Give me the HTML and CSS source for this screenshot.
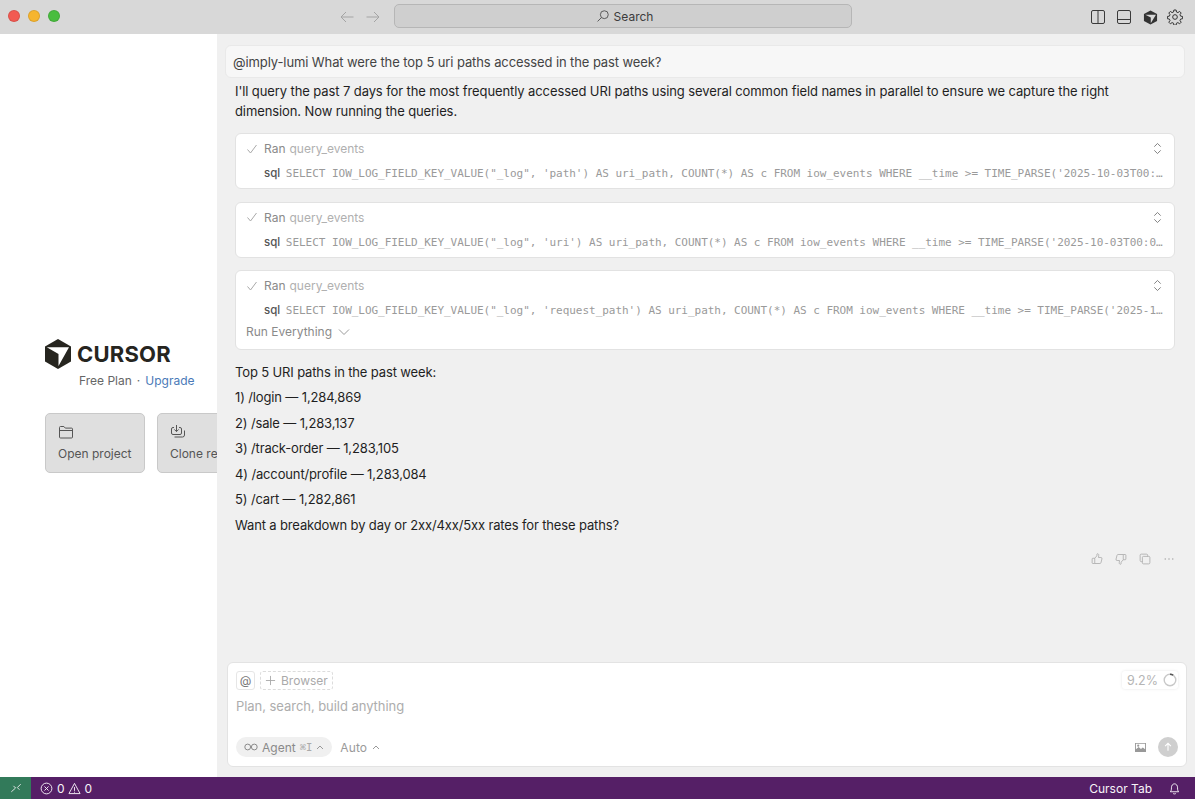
FILE: index.html
```html
<!DOCTYPE html>
<html lang="en">
<head>
<meta charset="utf-8">
<title>Cursor</title>
<link rel="stylesheet" href="styles.css">
</head>
<body>
<div class="window">
  <header class="titlebar">
    <div class="lights">
      <span class="light red"></span><span class="light yellow"></span><span class="light green"></span>
    </div>
    <div class="nav">
      <svg class="nav-icon" viewBox="0 0 16 16"><path d="M14.500 8H2M7 3 2 8l5 5"/></svg>
      <svg class="nav-icon" viewBox="0 0 16 16"><path d="M1.500 8H14M9 3l5 5-5 5"/></svg>
    </div>
    <div class="searchbox">
      <svg class="search-icon" viewBox="0 0 16 16"><circle cx="9.500" cy="6.500" r="4.500"/><path d="M6.200 9.800 1.800 14.200"/></svg>
      <span>Search</span>
    </div>
    <div class="title-actions">
      <svg class="tool" viewBox="0 0 14 14"><rect x=".5" y=".5" width="13" height="13" rx="1.500"/><path d="M7 .5v13"/></svg>
      <svg class="tool" viewBox="0 0 14 14"><rect x=".5" y=".5" width="13" height="13" rx="1.500"/><path d="M.5 9.500h13"/></svg>
      <svg class="tool cube-icon" viewBox="0 0 16 16"><path class="cube" d="M8 .5 15 4.300v7.400L8 15.500 1 11.700V4.300Z"/><path class="cube-cut" d="M2.500 5 13.800 5 8.300 14V8Z"/></svg>
      <svg class="tool gear" viewBox="0 0 24 24"><circle cx="12" cy="12" r="3.500"/><path d="M10.300 1.500h3.400l.5 3 2.200.9 2.500-1.800 2.400 2.400-1.800 2.500.9 2.200 3 .5v3.400l-3 .5-.9 2.200 1.800 2.500-2.400 2.400-2.500-1.800-2.200.9-.5 3h-3.400l-.5-3-2.200-.9-2.500 1.800-2.400-2.400 1.800-2.500-.9-2.200-3-.5v-3.400l3-.5.9-2.200-1.800-2.500 2.400-2.400 2.500 1.800 2.200-.9Z"/></svg>
    </div>
  </header>

  <div class="main">
    <aside class="sidebar">
      <div class="brand">
        <svg class="logo" viewBox="0 0 26 30"><path fill="#26251f" stroke="none" d="M13 0 26 7.500v15L13 30 0 22.500v-15Z"/><path fill="#fff" stroke="none" d="M1.800 8.300 24 8.300 13.500 27V15Z"/></svg>
        <span class="wordmark">CURSOR</span>
      </div>
      <div class="plan">Free Plan<span class="dot">·</span><span class="upgrade">Upgrade</span></div>
      <div class="cards">
        <div class="card">
          <svg class="card-icon" viewBox="0 0 16 16"><path d="M1.500 13V3.500a1 1 0 0 1 1-1h3.400l1.400 1.600h6.200a1 1 0 0 1 1 1V13a1 1 0 0 1-1 1h-11a1 1 0 0 1-1-1ZM1.500 6.500h13"/></svg>
          <span>Open project</span>
        </div>
        <div class="card">
          <svg class="card-icon" viewBox="0 0 16 16"><path d="M6.500 1v6.500M4.300 5.400l2.200 2.200 2.200-2.200M4 3.500H3a1.500 1.500 0 0 0-1.500 1.500v4A1.500 1.500 0 0 0 3 10.500h7A1.500 1.500 0 0 0 11.500 9V5A1.500 1.500 0 0 0 10 3.500H9M4.500 13h8a2 2 0 0 0 2-2V6.500"/></svg>
          <span>Clone repo</span>
        </div>
      </div>
    </aside>

    <main class="chat">
      <div class="thread">
        <div class="user-msg">@imply-lumi What were the top 5 uri paths accessed in the past week?</div>
        <p class="intro">I'll query the past 7 days for the most frequently accessed URI paths using several common field names in parallel to ensure we capture the right dimension. Now running the queries.</p>

        <section class="tool-card">
          <div class="tool-head">
            <svg class="check" viewBox="0 0 12 12"><path d="M1.500 6.500 4.500 10 10.500 2"/></svg>
            <span class="ran">Ran</span><span class="tool-name">query_events</span>
            <svg class="updown" viewBox="0 0 12 14"><path d="M2.500 5 6 1.500 9.500 5M2.500 9 6 12.500 9.500 9"/></svg>
          </div>
          <div class="tool-sql"><b>sql</b> SELECT IOW_LOG_FIELD_KEY_VALUE("_log", 'path') AS uri_path, COUNT(*) AS c FROM iow_events WHERE __time &gt;= TIME_PARSE('2025-10-03T00:…</div>
        </section>

        <section class="tool-card">
          <div class="tool-head">
            <svg class="check" viewBox="0 0 12 12"><path d="M1.500 6.500 4.500 10 10.500 2"/></svg>
            <span class="ran">Ran</span><span class="tool-name">query_events</span>
            <svg class="updown" viewBox="0 0 12 14"><path d="M2.500 5 6 1.500 9.500 5M2.500 9 6 12.500 9.500 9"/></svg>
          </div>
          <div class="tool-sql"><b>sql</b> SELECT IOW_LOG_FIELD_KEY_VALUE("_log", 'uri') AS uri_path, COUNT(*) AS c FROM iow_events WHERE __time &gt;= TIME_PARSE('2025-10-03T00:0…</div>
        </section>

        <section class="tool-card">
          <div class="tool-head">
            <svg class="check" viewBox="0 0 12 12"><path d="M1.500 6.500 4.500 10 10.500 2"/></svg>
            <span class="ran">Ran</span><span class="tool-name">query_events</span>
            <svg class="updown" viewBox="0 0 12 14"><path d="M2.500 5 6 1.500 9.500 5M2.500 9 6 12.500 9.500 9"/></svg>
          </div>
          <div class="tool-sql"><b>sql</b> SELECT IOW_LOG_FIELD_KEY_VALUE("_log", 'request_path') AS uri_path, COUNT(*) AS c FROM iow_events WHERE __time &gt;= TIME_PARSE('2025-1…</div>
          <div class="run-all">Run Everything
            <svg class="chev" viewBox="0 0 12 8"><path d="M1 1.500 6 6.500l5-5"/></svg>
          </div>
        </section>

        <div class="answer">
          <p>Top 5 URI paths in the past week:</p>
          <p>1) /login — 1,284,869</p>
          <p>2) /sale — 1,283,137</p>
          <p>3) /track-order — 1,283,105</p>
          <p>4) /account/profile — 1,283,084</p>
          <p>5) /cart — 1,282,861</p>
          <p>Want a breakdown by day or 2xx/4xx/5xx rates for these paths?</p>
        </div>

        <div class="msg-actions">
          <svg class="act" viewBox="0 0 16 16"><path d="M5 7v7H2.500a1 1 0 0 1-1-1V8a1 1 0 0 1 1-1Zm0 0 2.800-3.200V2a1 1 0 0 1 1-1c1.200 0 1.700 1.200 1.500 2.300L10 6h3.200a1.500 1.500 0 0 1 1.400 1.900l-1.300 5a1.500 1.500 0 0 1-1.400 1.100H5"/></svg>
          <svg class="act" viewBox="0 0 16 16"><path d="M11 9V2h2.500a1 1 0 0 1 1 1v5a1 1 0 0 1-1 1Zm0 0-2.800 3.200V14a1 1 0 0 1-1 1c-1.200 0-1.700-1.200-1.500-2.300L6 10H2.800a1.500 1.500 0 0 1-1.400-1.900l1.300-5A1.500 1.500 0 0 1 4.100 2H11"/></svg>
          <svg class="act" viewBox="0 0 16 16"><rect x="4.500" y="4.500" width="10" height="10" rx="1.500"/><path d="M11.500 4.500V3A1.500 1.500 0 0 0 10 1.500H3A1.500 1.500 0 0 0 1.500 3v7A1.500 1.500 0 0 0 3 11.500h1.500"/></svg>
          <svg class="act dots" viewBox="0 0 16 16"><circle cx="3" cy="8" r="1"/><circle cx="8" cy="8" r="1"/><circle cx="13" cy="8" r="1"/></svg>
        </div>
      </div>

      <div class="composer">
        <div class="composer-top">
          <span class="at">@</span>
          <span class="browser"><svg class="plus" viewBox="0 0 12 12"><path d="M6 1v10M1 6h10"/></svg>Browser</span>
          <span class="context">9.2%<svg class="ring" viewBox="0 0 14 14"><circle class="ring-track" cx="7" cy="7" r="5.800"/><path class="ring-fill" d="M7 1.200A5.800 5.800 0 0 1 10.200 2.200"/></svg></span>
        </div>
        <div class="placeholder">Plan, search, build anything</div>
        <div class="composer-bottom">
          <span class="agent">
            <svg class="infinity" viewBox="0 0 14 8"><circle cx="3.700" cy="4" r="2.900"/><circle cx="10.300" cy="4" r="2.900"/></svg>
            Agent <span class="kbd">⌘I</span>
            <svg class="caret" viewBox="0 0 8 5"><path d="M1 4 4 1l3 3"/></svg>
          </span>
          <span class="auto">Auto<svg class="caret" viewBox="0 0 8 5"><path d="M1 4 4 1l3 3"/></svg></span>
          <svg class="image-icon" viewBox="0 0 14 12"><path fill-rule="evenodd" d="M1 1h12v10H1Zm1 1v6l3-2.500 2.500 2 2-1.500L12 8V2Z"/><circle cx="4.500" cy="4" r="1.200"/></svg>
          <span class="send"><svg viewBox="0 0 12 12"><path d="M6 10.500V1.500M2.500 5 6 1.500 9.500 5"/></svg></span>
        </div>
      </div>
    </main>
  </div>

  <footer class="statusbar">
    <span class="remote"><svg viewBox="0 0 14 14"><path d="M1.500 11.500 6.500 7 4 4.500M12.500 2.500 8.500 6.500l2.500 2.500"/></svg></span>
    <span class="status-item">
      <svg class="st" viewBox="0 0 14 14"><circle cx="7" cy="7" r="5.800"/><path d="M4.800 4.800l4.400 4.400M9.200 4.800 4.800 9.200"/></svg>0
      <svg class="st warn" viewBox="0 0 14 14"><path d="M7 1.500 13 12.500H1ZM7 5.500v4M7 10.500v1"/></svg>0
    </span>
    <span class="status-right">Cursor Tab
      <svg class="st bell" viewBox="0 0 14 14"><path d="M2.500 10.500c1-1 1.200-2 1.200-4.200C3.700 3.700 5 2 7 2s3.300 1.700 3.300 4.300c0 2.200.2 3.200 1.200 4.200ZM5.500 12.300c.8.700 2.200.7 3 0"/></svg>
    </span>
  </footer>
</div>
</body>
</html>
```

FILE: styles.css
```css
* { box-sizing: border-box; }
html, body { margin: 0; height: 100%; }
body {
  font-family: Inter, "Liberation Sans", sans-serif;
  font-size: 13px;
  color: #1f1f1f;
  background: #fff;
  overflow: hidden;
}
svg { display: block; flex: none; fill: none; stroke: currentColor; stroke-width: 1; }

.window { display: flex; flex-direction: column; width: 1195px; height: 799px; }

/* title bar */
.titlebar {
  height: 34px; flex: none;
  display: flex; align-items: center;
  background: #d8d8d8;
}
.lights { display: flex; gap: 8px; margin-left: 8px; margin-top: -2px; }
.light { width: 12px; height: 12px; border-radius: 50%; border: 1px solid rgba(0,0,0,.1); }
.red { background: #f25a52; }
.yellow { background: #f6b52f; }
.green { background: #49bd3f; }
.nav { display: flex; gap: 10px; margin-left: 279px; color: #a4a4a4; }
.nav-icon { width: 16px; height: 16px; }
.searchbox {
  width: 458px; height: 24px; margin-left: 13px; margin-top: -2px;
  padding-left: 3px;
  display: flex; align-items: center; justify-content: center; gap: 4px;
  background: #cfcfcf;
  border: 1px solid #b6b6b6;
  border-radius: 5px;
  color: #3c3c3c;
  font-size: 12px;
}
.search-icon { width: 14px; height: 14px; color: #4a4a4a; }
.title-actions { display: flex; gap: 12px; align-items: center; margin-left: auto; margin-right: 12px; color: #3b3b3b; }
.tool { width: 14px; height: 14px; }
.cube-icon { width: 15px; height: 15px; margin-right: -3px; }
.cube { fill: #333; stroke: none; }
.cube-cut { fill: #d8d8d8; stroke: none; }
.gear { width: 16px; height: 16px; stroke-width: 1.500; color: #333; }

/* layout */
.main { flex: 1; display: flex; min-height: 0; }
.sidebar {
  width: 217px; flex: none;
  padding: 305px 0 0 45px;
  overflow: hidden;
  background: #fff;
}
.brand { display: flex; align-items: center; gap: 6px; }
.logo { width: 26px; height: 30px; }
.wordmark { font-size: 22px; font-weight: 700; color: #26251f; letter-spacing: .2px; line-height: 30px; }
.plan { margin: 4px 0 0 34px; font-size: 12px; color: #666; white-space: nowrap; line-height: 16px; }
.dot { margin: 0 5px; }
.upgrade { color: #4a7ab8; }
.cards { display: flex; gap: 12px; margin-top: 24px; }
.card {
  flex: none; width: 100px; height: 60px;
  padding: 10px 12px;
  display: flex; flex-direction: column; gap: 6px;
  background: #dfdfdf;
  border: 1px solid #c9c9c9;
  border-radius: 5px;
  color: #555;
  font-size: 12px;
  white-space: nowrap;
  line-height: 16px;
}
.card-icon { width: 16px; height: 16px; color: #555; }

/* chat */
.chat {
  flex: 1; min-width: 0;
  display: flex; flex-direction: column;
  background: #f0f0f0;
  padding: 11px 8px 10px 8px;
}
.thread { flex: 1; min-height: 0; display: flex; flex-direction: column; }
.user-msg {
  height: 33px; padding: 0 7px;
  display: flex; align-items: center;
  background: #f7f7f7;
  border: 1px solid #e9e9e9;
  border-radius: 6px;
  color: #444;
  font-size: 13px;
  letter-spacing: -.1px;
  margin-right: 2px;
}
.intro { margin: 3px 20px 0 10px; line-height: 20px; color: #1f1f1f; letter-spacing: -.1px; }
.tool-card {
  margin: 12.500px 12px 0 10px;
  padding: 6.500px 10px 6.500px;
  background: #fff;
  border: 1px solid #e2e2e2;
  border-radius: 6px;
}
.intro + .tool-card { margin-top: 12px; }
.tool-head { height: 16px; display: flex; align-items: center; font-size: 12px; }
.check { width: 12px; height: 12px; color: #a8a8a8; margin-right: 6px; }
.ran { color: #8a8a8a; margin-right: 4px; }
.tool-name { color: #b0b0b0; }
.updown { width: 11px; height: 13px; margin-left: auto; color: #777; margin-right: 1px; }
.tool-sql {
  margin: 8.500px 0 0 18px;
  height: 16.500px; line-height: 16px;
  font-family: "DejaVu Sans Mono", "Liberation Mono", monospace;
  font-size: 11px;
  letter-spacing: -.03px;
  color: #9a9a9a;
  white-space: nowrap;
}
.tool-sql b { font-family: Inter, sans-serif; font-weight: 500; color: #555; font-size: 11.500px; margin-right: -1px; letter-spacing: 0; }
.run-all { display: flex; align-items: center; gap: 6px; margin-top: 5.500px; padding-bottom: 2px; font-size: 12px; color: #8a8a8a; line-height: 16px; }
.chev { width: 12px; height: 8px; color: #9a9a9a; }
.answer { margin: 10px 20px 0 10px; letter-spacing: -.14px; }
.answer p { margin: 0; line-height: 25.500px; }
.msg-actions { display: flex; gap: 12px; justify-content: flex-end; margin: 15px 12px 0 0; color: #a6a6a6; }
.act { width: 12px; height: 12px; }
.dots { fill: currentColor; stroke: none; }

/* composer */
.composer {
  height: 105px; flex: none;
  margin-left: 2px;
  padding: 7px 8px 9px;
  display: flex; flex-direction: column;
  background: #fff;
  border: 1px solid #e3e3e3;
  border-radius: 6px;
}
.composer-top { display: flex; align-items: center; gap: 5px; height: 20px; font-size: 12px; color: #aaa; }
.at { width: 19px; height: 19px; display: flex; align-items: center; justify-content: center; border: 1px solid #e6e6e6; border-radius: 3px; color: #777; }
.browser { height: 19px; padding: 0 4px; display: flex; align-items: center; gap: 5px; border: 1px dashed #dcdcdc; border-radius: 3px; }
.plus { width: 11px; height: 11px; }
.context { margin-left: auto; display: flex; align-items: center; gap: 5px; height: 18px; padding: 0 1px 0 5px; border-radius: 3px; background: #fff; box-shadow: 0 0 3px rgba(0,0,0,.1); color: #b5b5b5; font-size: 12.500px; }
.ring { width: 14px; height: 14px; }
.ring-track { stroke: #c8c8c8; stroke-width: 1.400; }
.ring-fill { stroke: #555; stroke-width: 1.400; }
.placeholder { margin-top: 6px; color: #adadad; line-height: 20px; letter-spacing: -.05px; }
.composer-bottom { margin-top: auto; display: flex; align-items: center; height: 20px; font-size: 12px; color: #8a8a8a; }
.agent { height: 20px; padding: 0 8px 0 8px; display: flex; align-items: center; gap: 4px; background: #f0f0f0; border-radius: 10px; }
.infinity { width: 14px; height: 8px; }
.kbd { font-family: "DejaVu Sans Mono", monospace; font-size: 10.500px; color: #aaa; }
.caret { width: 8px; height: 5px; color: #999; }
.auto { display: flex; align-items: center; gap: 5px; margin-left: 8px; color: #9a9a9a; letter-spacing: .1px; }
.image-icon { width: 13px; height: 11px; margin-left: auto; margin-right: 11px; fill: #999; stroke: none; }
.send { width: 20px; height: 20px; border-radius: 50%; background: #cfcfcf; display: flex; align-items: center; justify-content: center; color: #fff; }
.send svg { width: 10px; height: 10px; stroke-width: 1.300; }

/* status bar */
.statusbar {
  height: 22px; flex: none;
  display: flex; align-items: center;
  background: #551f66;
  color: #f7f3f8;
  font-size: 12px;
}
.remote { width: 31px; height: 100%; display: flex; align-items: center; justify-content: center; background: #327a5a; }
.remote svg { width: 12px; height: 12px; }
.status-item { display: flex; align-items: center; gap: 4px; margin-left: 9px; }
.st { width: 13px; height: 13px; }
.warn { margin-left: -1px; }
.status-right { margin-left: auto; margin-right: 14px; display: flex; align-items: center; gap: 16px; }
```
